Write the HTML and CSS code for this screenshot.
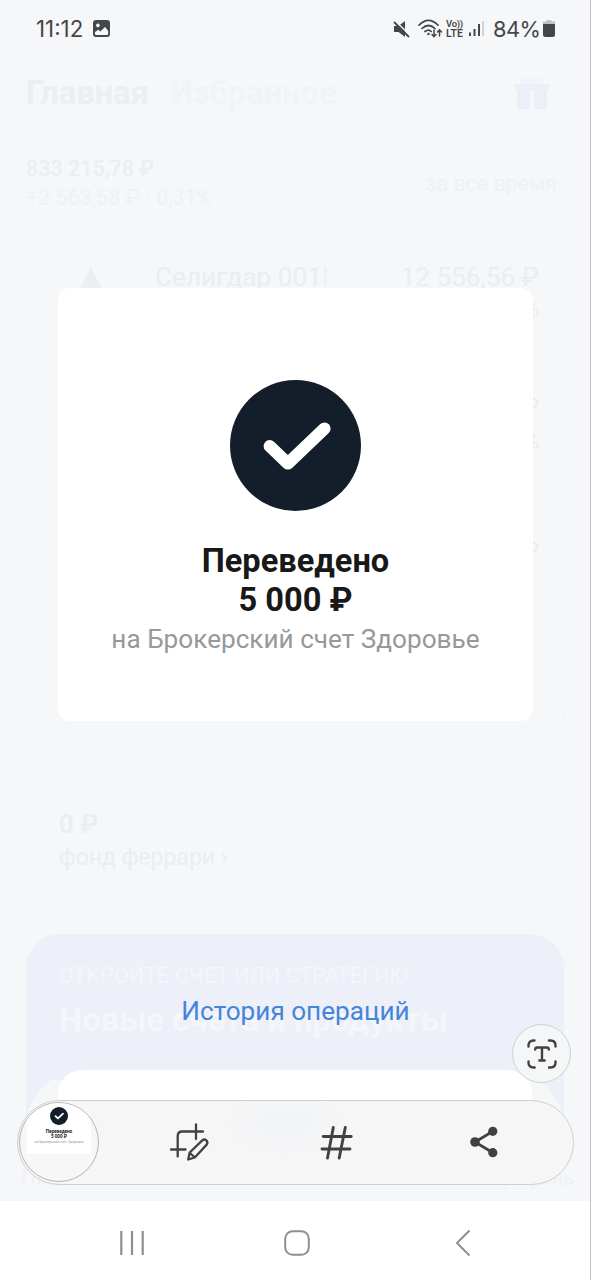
FILE: index.html
```html
<!DOCTYPE html>
<html lang="ru">
<head>
<meta charset="utf-8">
<title>Переведено</title>
<link rel="stylesheet" href="styles.css">
</head>
<body>
<div class="screen">
  <main class="app">
    <header class="tabs">
      <span class="tab tab-on">Главная</span>
      <span class="tab tab-off">Избранное</span>
      <svg class="gift" width="34" height="36" viewBox="0 0 34 36" fill="#ebf0f8"><path d="M0 9h34v6H0zM2 15h13v19H5a3 3 0 0 1-3-3zM19 15h13v16a3 3 0 0 1-3 3H19z"/><path d="M7 8c-1-5 5-8 10-2 5-6 11-3 10 2z" opacity=".6"/></svg>
    </header>
    <section class="summary">
      <div>
        <div class="total">833 215,78 ₽</div>
        <div class="gain">+2 563,58 ₽ · 0,31%</div>
      </div>
      <div class="period">за все время</div>
    </section>
    <section class="card holdings">
      <div class="holding">
        <svg width="24" height="30" viewBox="0 0 24 30"><path d="M12 0L24 24v6H0v-6z" fill="#eceef0"/></svg>
        <span class="holding-name">Селигдар 001<i>l</i></span>
        <span class="holding-sum">12 556,56 ₽</span>
      </div>
      <div class="pct p1">%</div>
      <div class="pct p2">₽</div>
      <div class="pct p3">%</div>
      <div class="pct p4">₽</div>
    </section>
    <div class="card-gap"></div>
    <section class="card fund">
      <div class="fund-sum">0 ₽</div>
      <div class="fund-name">фонд феррари ›</div>
    </section>
    <section class="promo">
      <div class="promo-over">ОТКРОЙТЕ СЧЕТ ИЛИ СТРАТЕГИЮ</div>
      <div class="promo-title">Новые счета и продукты</div>
      <div class="promo-body"><div class="promo-sheet"></div></div>
    </section>
  </main>

  <div class="bottom-tabs"><span>Главная</span><span>Профиль</span></div>

  <div class="status">
    <span class="clock">11:12</span>
    <svg class="pic" width="17" height="17" viewBox="0 0 17 17"><rect width="17" height="17" rx="3" fill="#454648"/><circle cx="4.9" cy="5.4" r="1.8" fill="#f5f7f9"/><path d="M2 13.8V12l3.3-2.200 2 1.700 4.800-4.500L15.200 11v2.800q0 1.200-1.200 1.200H3.200Q2 15 2 13.800z" fill="#f5f7f9"/></svg>
    <svg class="mute" width="17" height="18" viewBox="0 0 17 18"><path d="M1 6h4.500L12 1v16L5.500 12H1z" fill="#454648"/><path d="M1 0L18 16" stroke="#f5f7f9" stroke-width="1.500"/><path d="M1 2L16 17" stroke="#454648" stroke-width="1.800"/></svg>
    <svg class="wifi" width="25" height="20" viewBox="0 0 25 20" fill="none" stroke="#454648" stroke-width="1.700" stroke-linecap="round"><path d="M1 6.200q9.500-9.500 19 0M4 9.500q6.500-6 13 0M7 12.500q3.500-2.800 6.200 0"/><circle cx="10.500" cy="15" r=".5"/><path d="M16 11v6.500m-2-2l2 2.200 2-2.200M21.500 17v-6m-2 2l2-2.200 2 2.200" stroke-width="1.500"/></svg>
    <span class="volte"><b class="vo">Vo))</b><b>LTE</b></span>
    <svg class="signal" width="16" height="17" viewBox="0 0 16 17" fill="#454648"><rect y="12.500" width="2" height="3.500"/><rect x="4.500" y="9" width="2" height="7"/><rect x="9" y="4" width="2" height="12"/><rect x="13.300" y="1" width="1.500" height="15" fill="#c6c8ca"/></svg>
    <span class="battery-pct">84%</span>
    <svg class="battery" width="12" height="17" viewBox="0 0 12 17"><path d="M3.500 0h5v1.500H12V6H0V1.500h3.500z" fill="#bfc1c2"/><path d="M0 4h12v10.500q0 2.500-2.500 2.500h-7Q0 17 0 14.500z" fill="#454648"/></svg>
  </div>

  <section class="dialog">
    <svg class="done" width="131" height="131" viewBox="0 0 131 131"><circle cx="65.500" cy="65.500" r="65.500" fill="#141e2b"/><path d="M39.700 66.200L57.900 83.500 94.500 48.500" fill="none" stroke="#fff" stroke-width="12.200" stroke-linecap="round" stroke-linejoin="round"/></svg>
    <div class="done-title">Переведено</div>
    <div class="done-title done-sum">5 000 ₽</div>
    <div class="done-sub">на Брокерский счет Здоровье</div>
  </section>
  <a class="history">История операций</a>

  <button class="extract"><svg width="30" height="30" viewBox="0 0 30 30" fill="none" stroke="#414141" stroke-width="2.400" stroke-linecap="round"><path d="M1.500 7.500v-1q0-5 5-5h1M22 1.500h1.500q5 0 5 5v1M28.500 22.500v1q0 5-5 5H22M7.700 28.500H6.500q-5 0-5-5v-1"/><path d="M8.200 10.500q0-2 2-2h9.600q2 0 2 2M15 9v12.500M12.300 21.500h5.400"/></svg></button>

  <div class="toolbar">
    <div class="thumb">
      <div class="thumb-card">
        <svg width="18" height="18" viewBox="0 0 131 131"><circle cx="65.500" cy="65.500" r="65.500" fill="#141e2b"/><path d="M39.700 66.200L57.900 83.500 94.500 48.500" fill="none" stroke="#fff" stroke-width="13" stroke-linecap="round" stroke-linejoin="round"/></svg>
        <div class="thumb-title">Переведено<br>5 000 ₽</div>
        <div class="thumb-sub">на Брокерский счет Здоровье</div>
      </div>
    </div>
    <svg class="crop" width="40" height="38" viewBox="0 0 40 38" fill="none" stroke="#414141" stroke-width="2.300" stroke-linecap="round" stroke-linejoin="round"><path d="M1 26.500h14.500M7.700 33.500V13q0-4.500 4.500-4.500H33M26 1.500V16"/><path d="M18.200 36.500l1.500-7L32.300 17.400q2-1.900 4 0t.4 4.200L24.800 34.500zM20 30l4.300 4"/></svg>
    <svg class="hash" width="33" height="35" viewBox="0 0 33 35" fill="none" stroke="#414141" stroke-width="2.900" stroke-linecap="round"><path d="M3.200 11.500h28M2 24h28M13.300 2.500L7.500 33M25.300 2.500L19.200 33"/></svg>
    <svg class="share" width="28" height="32" viewBox="0 0 28 32"><path d="M22.500 5.500L5 16l17.500 10.500" fill="none" stroke="#414141" stroke-width="2.700"/><g fill="#414141"><circle cx="22.800" cy="5.300" r="4.600"/><circle cx="5" cy="16" r="4.800"/><circle cx="22.800" cy="26.700" r="4.600"/></g></svg>
  </div>

  <nav class="nav">
    <svg width="24" height="26" viewBox="0 0 24 26" stroke="#8f8f8f" stroke-width="2.200"><path d="M1.300 1v24M12 1v24M22.700 1v24"/></svg>
    <svg class="home" width="26" height="26" viewBox="0 0 26 26" fill="none" stroke="#8f8f8f" stroke-width="2"><rect x="1.200" y="1.200" width="23.600" height="23.600" rx="7.500"/></svg>
    <svg width="16" height="28" viewBox="0 0 16 28" fill="none" stroke="#8f8f8f" stroke-width="2"><path d="M14.500 1.500L2 14l12.500 12.500"/></svg>
  </nav>
  <div class="edge"></div>
</div>
</body>
</html>
```
FILE: styles.css
```css
* { box-sizing: border-box; }
body { margin: 0; background: #f5f7f9; font-family: Roboto, sans-serif; }
svg { display: block; flex: none; }
.screen { position: relative; width: 591px; height: 1280px; overflow: hidden; background: #f5f7f9; }

.app { display: flex; flex-direction: column; padding: 73px 26px 0; white-space: nowrap; }
.tabs { display: flex; align-items: center; height: 40px; padding-right: 16px; font-size: 32.600px; font-weight: 700; }
.tab-on { width: 144px; color: #eceef0; }
.tab-off { color: #f1f3f5; }
.gift { margin-left: auto; }
.summary { display: flex; justify-content: space-between; align-items: center; height: 60px; margin-top: 40px; padding-right: 8px; font-size: 21.500px; line-height: 29px; }
.total { color: #eceef0; font-weight: 500; }
.gain { color: #ecf3f3; }
.period { color: #eff1f3; }
.card { border: 1px solid #f2f4f6; }
.holdings { height: 516px; margin-top: 14px; border-top-color: transparent; border-radius: 0 0 32px 32px; padding: 32px 25px 0 54px; font-size: 26.200px; line-height: 34px; color: #ebedef; }
.holding { display: flex; align-items: flex-start; height: 34px; }
.holding svg { margin-top: 7px; margin-left: -2px; }
.holding-name { margin-left: 52px; }
.holding-name i { font-style: normal; opacity: .6; }
.holding-sum { margin-left: auto; }
.pct { text-align: right; font-size: 22px; height: 34px; line-height: 30px; }
.p2 { margin-top: 64px; }
.p3 { margin-top: 1px; }
.p4 { margin-top: 75px; }
.card-gap { height: 24px; margin: 0 33px; background: #f4f6f8; }
.fund { height: 157px; border-top: 0; border-radius: 0 0 32px 32px; padding: 39px 32px 0; color: #ebedef; }
.fund-sum { font-size: 26px; font-weight: 500; line-height: 36px; }
.fund-name { font-size: 23px; line-height: 32px; }
.promo { height: 300px; margin-top: 10px; width: 538px; border-radius: 34px 34px 0 0; background: #edf0f8; padding: 27px 0 0; color: #f4f6f9; }
.promo-over { padding-left: 33px; font-size: 21.600px; line-height: 30px; }
.promo-title { padding-left: 33px; font-size: 32.800px; font-weight: 700; line-height: 58px; }
.promo-body { height: 180px; margin-top: 21px; padding: 0 32px; background: linear-gradient(#f5f7f9, #f5f7f9) center 10px / 538px 180px no-repeat; clip-path: inset(-1px 0 0 0 round 60px 60px 0 0); }
.promo-sheet { height: 32px; border-radius: 24px 24px 0 0; background: #fff; }

.bottom-tabs { position: absolute; left: 0; right: 0; top: 1130px; height: 71px; padding: 36px 17px 0 21px; display: flex; justify-content: space-between; font-size: 20px; line-height: 24px; color: #eff1f3; background: linear-gradient(transparent, #f5f7f9 40%); }

.status { position: absolute; inset: 0 0 auto 0; height: 57px; padding: 0 36px; display: flex; align-items: center; color: #454648; }
.clock { width: 57px; font: 22.300px Inter, sans-serif; letter-spacing: 0; }
.mute { margin-left: 283px; }
.wifi { margin-left: 8px; }
.volte { margin-left: 3px; width: 18px; display: flex; flex-direction: column; font-size: 10.500px; line-height: 9.500px; }
.volte b { font-weight: 600; }
.volte .vo { font-size: 9.500px; letter-spacing: -.3px; }
.signal { margin-left: 5px; }
.battery-pct { margin-left: 8px; width: 50px; font: 21.800px Inter, sans-serif; letter-spacing: -.5px; }

.dialog { position: absolute; left: 58px; top: 288px; width: 475px; height: 433px; padding-top: 92px; border-radius: 12px; background: #fff; display: flex; flex-direction: column; align-items: center; white-space: nowrap; }
.done { margin-bottom: 31px; }
.done-title { font-size: 32.600px; line-height: 39px; font-weight: 700; color: #181818; }
.done-sub { font-size: 26.150px; line-height: 39px; color: #96999c; }
.history { position: absolute; left: 0; width: 591px; top: 991px; text-align: center; font-size: 26.150px; line-height: 40px; color: #4485dc; }

.extract { position: absolute; left: 512px; top: 1024px; width: 59px; height: 59px; padding: 0; border: 1px solid #d0d0d0; border-radius: 50%; background: #f5f6f7; display: grid; place-items: center; }
.toolbar { position: absolute; left: 17px; top: 1100px; width: 557px; height: 85px; padding-bottom: 1px; border: 1px solid #cfcfcf; border-radius: 43px; background: radial-gradient(ellipse 60px 32px at 268px 22px, rgba(239, 242, 249, .8), transparent), rgba(245, 245, 245, .95); display: flex; align-items: center; }
.thumb { width: 80px; height: 80px; margin-left: 1px; border: 1px solid #b5b5b5; border-radius: 50%; overflow: hidden; background: #f5f7f9; display: flex; flex: none; justify-content: center; }
.thumb-card { width: 64px; height: 51px; padding-top: 4px; background: #fff; display: flex; flex-direction: column; align-items: center; white-space: nowrap; }
.thumb-title { margin-top: 4px; text-align: center; font-size: 4.600px; line-height: 5px; font-weight: 700; color: #181818; }
.thumb-sub { margin-top: 1px; font-size: 3.500px; line-height: 5px; color: #96999c; }
.crop { margin-left: 71px; }
.hash { margin-left: 110px; }
.share { margin-left: 117px; }

.nav { position: absolute; left: 0; top: 1201px; width: 591px; height: 79px; padding: 4px 120px 0 120px; background: #fff; display: flex; align-items: center; justify-content: space-between; }
.home { margin-right: 5px; }
.edge { position: absolute; right: 0; top: 0; width: 1px; height: 1280px; background: #c2c3c4; }
```
